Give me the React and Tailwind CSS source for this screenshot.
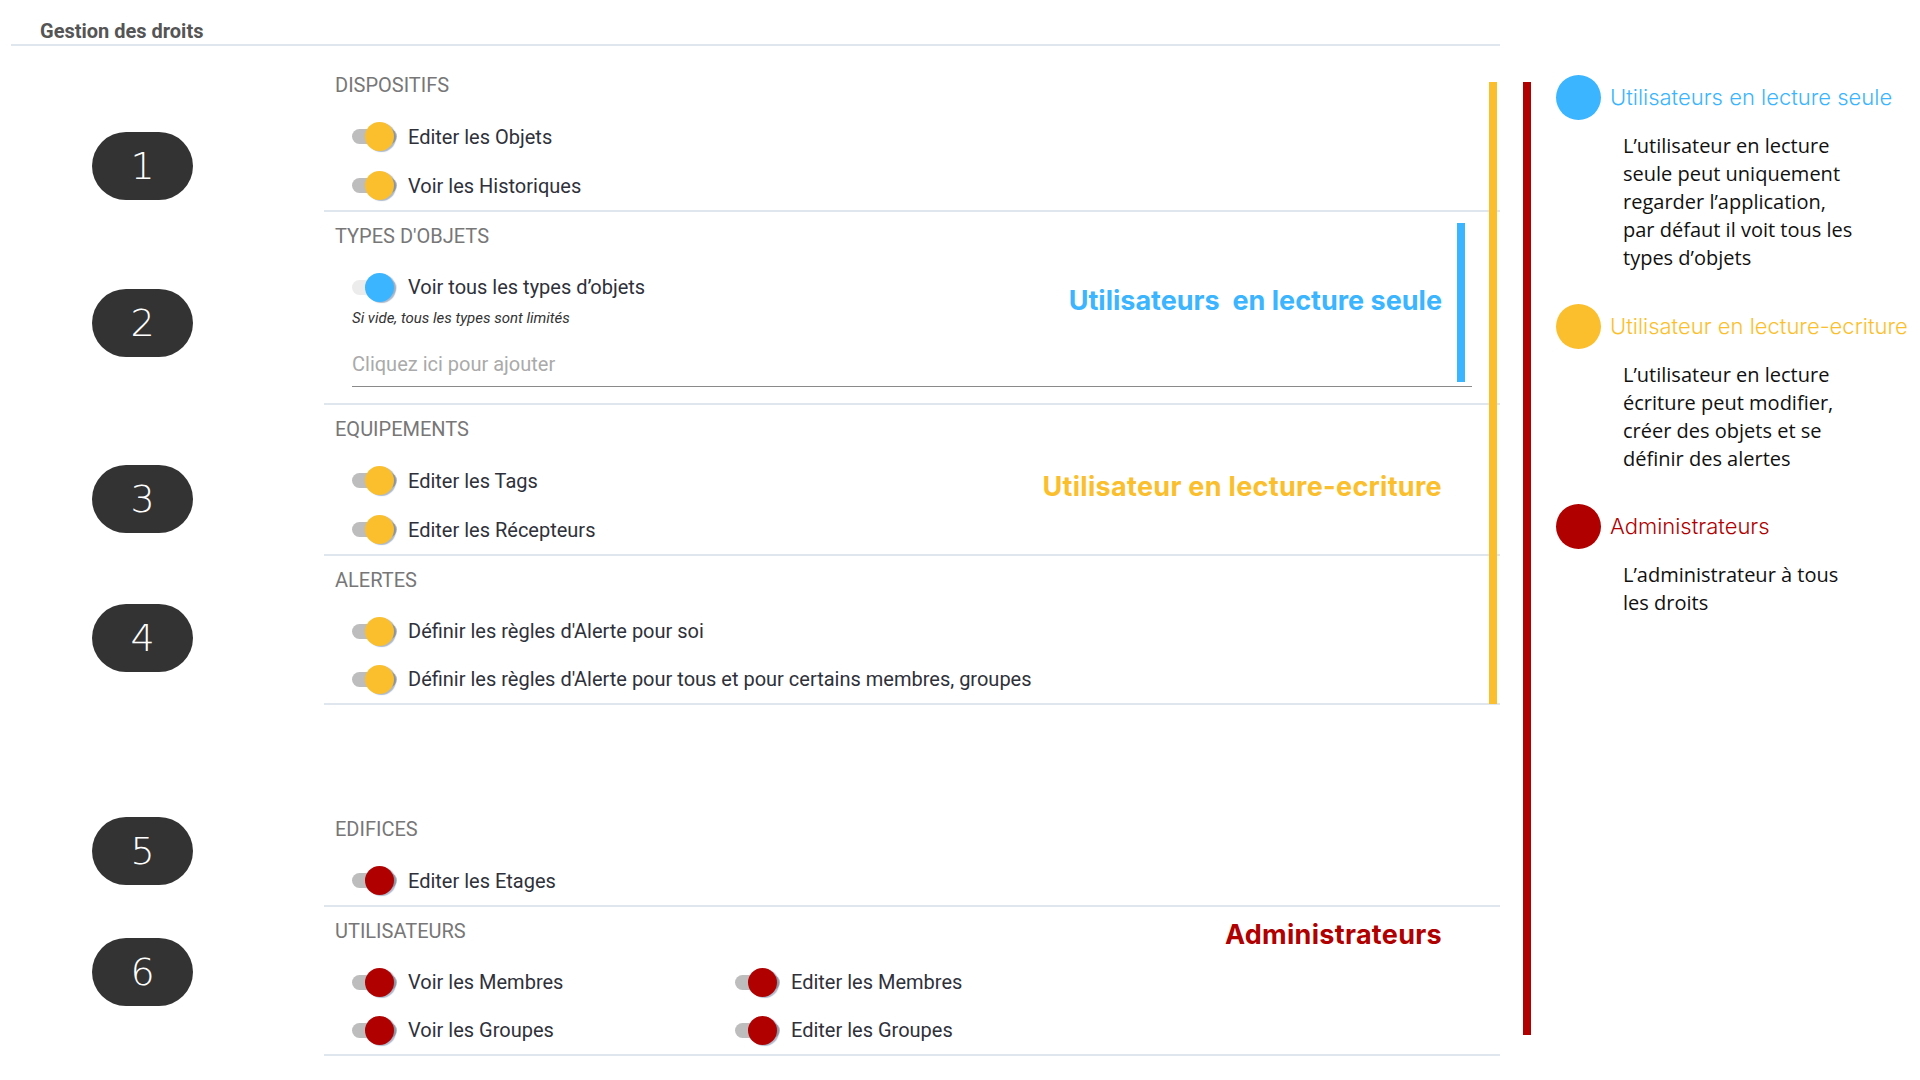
// App.jsx — rights management screen with colour legend

const KNOB = {
  yellow: "bg-[#fbbf2d]",
  blue: "bg-[#3bb5ff]",
  red: "bg-[#b00000]",
};

function Toggle({ color, off }) {
  return (
    <div className="relative w-[45px] h-[29px] flex items-center shrink-0">
      <div
        className={`w-[45px] h-[15px] rounded-full ${
          off ? "bg-[#ececec]" : "bg-[#bdbdbd]"
        }`}
      />
      <div
        className={`absolute right-[3px] top-0 w-[29px] h-[29px] rounded-full ${KNOB[color]} shadow-[2px_1px_1px_rgba(70,100,140,0.45)]`}
      />
    </div>
  );
}

function Row({ label, color, off, h = "h-[49px]" }) {
  return (
    <div className={`${h} flex items-center pl-[28px]`}>
      <Toggle color={color} off={off} />
      <span className="ml-[11px] text-[20px] text-[#2f313a] whitespace-nowrap">
        {label}
      </span>
    </div>
  );
}

function Pill({ n, mt }) {
  return (
    <div
      className={`${mt} w-[101px] h-[68px] rounded-full bg-[#333333] flex items-center justify-center text-white text-[38px] font-light font-['DejaVu_Sans',sans-serif]`}
    >
      {n}
    </div>
  );
}

function Title({ children }) {
  return (
    <div className="h-[24px] leading-[24px] pl-[11px] text-[20px] text-[#777] uppercase">
      {children}
    </div>
  );
}

function Section({ n, pillMt, pt = "pt-[12px]", outer = "", children }) {
  return (
    <div className={`flex ${outer}`}>
      <div className="w-[324px] shrink-0 pl-[92px]">
        <Pill n={n} mt={pillMt} />
      </div>
      <div className={`relative w-[1176px] border-b-2 border-[#dfe6ee] ${pt}`}>
        {children}
      </div>
    </div>
  );
}

const legend = [
  {
    color: "bg-[#3bb5ff]",
    text: "text-[#3bb5ff]",
    label: "Utilisateurs en lecture seule",
    desc: [
      "L’utilisateur en lecture",
      "seule peut uniquement",
      "regarder l’application,",
      "par défaut il voit tous les",
      "types d’objets",
    ],
    mt: "mt-0",
  },
  {
    color: "bg-[#fbbf2d]",
    text: "text-[#fbbf2d]",
    label: "Utilisateur en lecture-ecriture",
    desc: [
      "L’utilisateur en lecture",
      "écriture peut modifier,",
      "créer des objets et se",
      "définir des alertes",
    ],
    mt: "mt-[32px]",
  },
  {
    color: "bg-[#b00000]",
    text: "text-[#b00000]",
    label: "Administrateurs",
    desc: ["L’administrateur à tous", "les droits"],
    mt: "mt-[31px]",
  },
];

export default function App() {
  return (
    <div className="relative w-[1920px] h-[1080px] bg-white overflow-hidden flex font-['Roboto',sans-serif]">
      <div className="w-[1500px] shrink-0">
        {/* header */}
        <div className="ml-[11px] w-[1489px] h-[46px] border-b-2 border-[#dfe6ee] pl-[29px] pt-[19px]">
          <div className="text-[20px] leading-[24px] font-bold text-[#555]">
            Gestion des droits
          </div>
        </div>

        <Section n="1" pillMt="mt-[86px]" pt="pt-[27px]">
          <Title>Dispositifs</Title>
          <div className="mt-[15px]">
            <Row label="Editer les Objets" color="yellow" />
            <Row label="Voir les Historiques" color="yellow" />
          </div>
        </Section>

        <Section n="2" pillMt="mt-[77px]">
          <Title>Types d'objets</Title>
          <div className="mt-[24px]">
            <Row label="Voir tous les types d’objets" color="blue" off h="h-[30px]" />
          </div>
          <div className="mt-[8px] pl-[28px] text-[15px] leading-[16px] italic text-[#333]">
            Si vide, tous les types sont limités
          </div>
          <div className="mt-[16px] ml-[28px] w-[1120px] h-[45px] border-b border-[#8a8a8a] flex items-center text-[20px] text-[#aaa]">
            Cliquez ici pour ajouter
          </div>
          <div className="h-[16px]" />
          <div className="absolute right-[58px] top-[73px] leading-[32px] text-[27px] font-bold text-[#3bb5ff] font-['Inter',sans-serif] whitespace-pre">
            Utilisateurs  en lecture seule
          </div>
        </Section>

        <Section n="3" pillMt="mt-[60px]">
          <Title>Equipements</Title>
          <div className="mt-[15px]">
            <Row label="Editer les Tags" color="yellow" />
            <Row label="Editer les Récepteurs" color="yellow" />
          </div>
          <div className="absolute right-[58px] top-[66px] leading-[32px] text-[27px] font-bold tracking-[0.3px] text-[#fbbf2d] font-['Inter',sans-serif] whitespace-nowrap">
            Utilisateur en lecture-ecriture
          </div>
        </Section>

        <Section n="4" pillMt="mt-[48px]">
          <Title>Alertes</Title>
          <div className="mt-[15px]">
            <Row label="Définir les règles d'Alerte pour soi" color="yellow" h="h-[48px]" />
            <Row
              label="Définir les règles d'Alerte pour tous et pour certains membres, groupes"
              color="yellow"
              h="h-[48px]"
            />
          </div>
        </Section>

        <Section n="5" pillMt="mt-[12px]" outer="mt-[100px]">
          <Title>Edifices</Title>
          <div className="mt-[15px]">
            <Row label="Editer les Etages" color="red" />
          </div>
        </Section>

        <Section n="6" pillMt="mt-[31px]">
          <Title>Utilisateurs</Title>
          <div className="mt-[15px] grid grid-cols-[383px_1fr]">
            <Row label="Voir les Membres" color="red" h="h-[48px]" />
            <Row label="Editer les Membres" color="red" h="h-[48px]" />
            <Row label="Voir les Groupes" color="red" h="h-[48px]" />
            <Row label="Editer les Groupes" color="red" h="h-[48px]" />
          </div>
          <div className="absolute right-[58px] top-[12px] leading-[32px] text-[27px] font-bold tracking-[0.3px] text-[#b00000] font-['Inter',sans-serif]">
            Administrateurs
          </div>
        </Section>
      </div>

      {/* legend */}
      <div className="ml-[56px] pt-[75px]">
        {legend.map((item) => (
          <div key={item.label} className={item.mt}>
            <div className="flex items-center">
              <div className={`w-[45px] h-[45px] rounded-full shrink-0 ${item.color}`} />
              <span
                className={`ml-[9px] text-[22px] font-light whitespace-nowrap font-['Inter',sans-serif] ${item.text}`}
              >
                {item.label}
              </span>
            </div>
            <div className="mt-[12px] pl-[67px] text-[20px] leading-[28px] text-[#111] font-['Open_Sans',sans-serif]">
              {item.desc.map((line) => (
                <div key={line}>{line}</div>
              ))}
            </div>
          </div>
        ))}
      </div>

      {/* colour bars */}
      <div className="absolute left-[1457px] top-[223px] w-[8px] h-[159px] bg-[#3bb5ff]" />
      <div className="absolute left-[1489px] top-[82px] w-[8px] h-[622px] bg-[#fbbf2d]" />
      <div className="absolute left-[1523px] top-[82px] w-[8px] h-[953px] bg-[#b00000]" />
    </div>
  );
}
